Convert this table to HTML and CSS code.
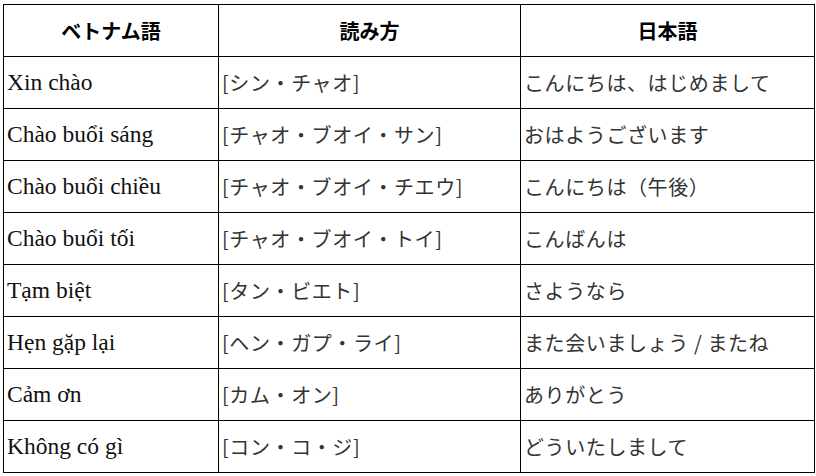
FILE: index.html
```html
<!DOCTYPE html>
<html lang="ja">
<head>
<meta charset="utf-8">
<link rel="stylesheet" href="styles.css">
</head>
<body>
<table class="vt">
  <colgroup>
    <col class="c1">
    <col class="c2">
    <col class="c3">
  </colgroup>
  <thead>
    <tr><th>ベトナム語</th><th>読み方</th><th>日本語</th></tr>
  </thead>
  <tbody>
    <tr><td class="vn">Xin chào</td><td class="jp">[シン・チャオ]</td><td class="jp jp3">こんにちは、はじめまして</td></tr>
    <tr><td class="vn">Chào buổi sáng</td><td class="jp">[チャオ・ブオイ・サン]</td><td class="jp jp3">おはようございます</td></tr>
    <tr><td class="vn">Chào buổi chiều</td><td class="jp">[チャオ・ブオイ・チエウ]</td><td class="jp jp3">こんにちは（午後）</td></tr>
    <tr><td class="vn">Chào buổi tối</td><td class="jp">[チャオ・ブオイ・トイ]</td><td class="jp jp3">こんばんは</td></tr>
    <tr><td class="vn">Tạm biệt</td><td class="jp">[タン・ビエト]</td><td class="jp jp3">さようなら</td></tr>
    <tr><td class="vn">Hẹn gặp lại</td><td class="jp">[ヘン・ガプ・ライ]</td><td class="jp jp3">また会いましょう / またね</td></tr>
    <tr><td class="vn">Cảm ơn</td><td class="jp">[カム・オン]</td><td class="jp jp3">ありがとう</td></tr>
    <tr><td class="vn">Không có gì</td><td class="jp">[コン・コ・ジ]</td><td class="jp jp3">どういたしまして</td></tr>
  </tbody>
</table>
</body>
</html>
```
FILE: styles.css
```css
html, body {
  margin: 0;
  padding: 0;
  background: #fff;
}
.vt {
  margin: 4px 0 0 3px;
  border-collapse: collapse;
  table-layout: fixed;
  width: 811px;
}
.c1 { width: 215px; }
.c2 { width: 302px; }
.c3 { width: 294px; }
.vt th, .vt td {
  border: 1.5px solid #000;
  height: 52px;
  box-sizing: border-box;
  padding: 0 3px;
  vertical-align: middle;
  white-space: nowrap;
  overflow: hidden;
}
.vt th {
  font-family: "Noto Sans CJK JP", sans-serif;
  font-weight: 700;
  font-size: 20px;
  color: #000;
  text-align: center;
}
.vn {
  font-family: "Liberation Serif", "Noto Serif", serif;
  font-size: 23.5px;
  color: #111;
}
.jp {
  font-family: "Noto Sans CJK JP", sans-serif;
  font-size: 20px;
  color: #333;
  letter-spacing: 0.6px;
}
.jp3 {
  padding-left: 6px;
}
```
